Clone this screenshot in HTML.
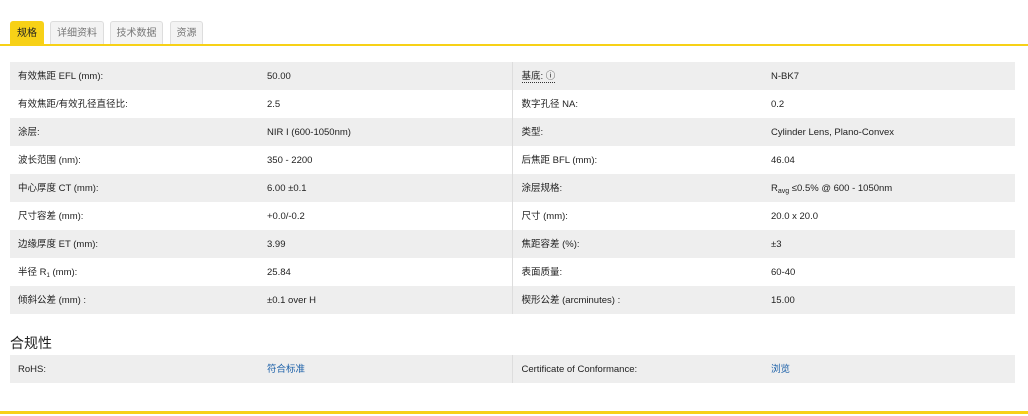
<!DOCTYPE html>
<html><head><meta charset="utf-8"><style>
*{margin:0;padding:0;box-sizing:border-box}
body{width:1028px;height:416px;background:#fff;font-family:"Liberation Sans","Noto Sans CJK SC",sans-serif;font-size:10px;color:#222;position:relative;overflow:hidden}
.tabs{position:absolute;top:21px;left:10px;height:24px}
.tab{position:absolute;top:0;height:24px;border:1px solid #ddd;border-bottom:none;background:#f3f3f3;color:#777;font-size:10px;line-height:24px;text-align:center;border-radius:3px 3px 0 0}
.tab.a{background:#f7d117;color:#222;border-color:#f7d117}
.line{position:absolute;left:0;width:1028px;height:2px;background:#f7d117}
table{position:absolute;left:10px;width:1005px;border-collapse:collapse}
td{height:28px;padding:2px 0 0 0;vertical-align:middle;font-size:9.5px;line-height:12px}
sub{line-height:0;vertical-align:-2px}
tr:nth-child(odd) td{background:#eee}
td.l{padding-left:8px;width:257px}
td.v{width:245px;border-right:1px solid #ddd}
td.l2{padding-left:9px;width:259px}
a{color:#1a5fa8;text-decoration:none}
h3{position:absolute;left:10px;top:333px;font-size:14px;font-weight:normal;color:#222}
</style></head><body>
<div class="tabs">
<div class="tab a" style="left:0;width:34px">规格</div>
<div class="tab" style="left:40px;width:54px">详细资料</div>
<div class="tab" style="left:100px;width:53px">技术数据</div>
<div class="tab" style="left:160px;width:33px">资源</div>
</div>
<div class="line" style="top:44px"></div>
<table style="top:62px">
<tr><td class="l">有效焦距 EFL (mm):</td><td class="v">50.00</td><td class="l2"><span style="border-bottom:1px dotted #333">基底: ⓘ</span></td><td>N-BK7</td></tr>
<tr><td class="l">有效焦距/有效孔径直径比:</td><td class="v">2.5</td><td class="l2">数字孔径 NA:</td><td>0.2</td></tr>
<tr><td class="l">涂层:</td><td class="v">NIR I (600-1050nm)</td><td class="l2">类型:</td><td>Cylinder Lens, Plano-Convex</td></tr>
<tr><td class="l">波长范围 (nm):</td><td class="v">350 - 2200</td><td class="l2">后焦距 BFL (mm):</td><td>46.04</td></tr>
<tr><td class="l">中心厚度 CT (mm):</td><td class="v">6.00 ±0.1</td><td class="l2">涂层规格:</td><td>R<sub style="font-size:7px">avg</sub> ≤0.5% @ 600 - 1050nm</td></tr>
<tr><td class="l">尺寸容差 (mm):</td><td class="v">+0.0/-0.2</td><td class="l2">尺寸 (mm):</td><td>20.0 x 20.0</td></tr>
<tr><td class="l">边缘厚度 ET (mm):</td><td class="v">3.99</td><td class="l2">焦距容差 (%):</td><td>±3</td></tr>
<tr><td class="l">半径 R<sub style="font-size:6px">1</sub> (mm):</td><td class="v">25.84</td><td class="l2">表面质量:</td><td>60-40</td></tr>
<tr><td class="l">倾斜公差 (mm) :</td><td class="v">±0.1 over H</td><td class="l2">楔形公差 (arcminutes) :</td><td>15.00</td></tr>
</table>
<h3>合规性</h3>
<table style="top:355px">
<tr><td class="l">RoHS:</td><td class="v"><a>符合标准</a></td><td class="l2">Certificate of Conformance:</td><td><a>浏览</a></td></tr>
</table>
<div class="line" style="top:411px;height:3px"></div>
</body></html>
